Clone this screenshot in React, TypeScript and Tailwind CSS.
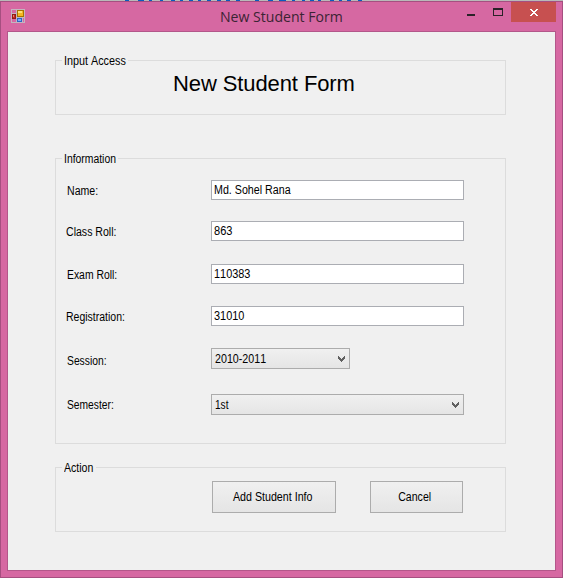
import type { ReactNode } from "react";

const backdropMarks = [
  [125, 4], [138, 6], [149, 3], [160, 3], [171, 4], [180, 3], [189, 4], [198, 3], [207, 4], [217, 4], [226, 4], [236, 4],
  [255, 4], [268, 5], [279, 7], [292, 3], [302, 3], [310, 4], [318, 3], [330, 4], [339, 3], [347, 4], [358, 4],
];

function AppIcon() {
  return (
    <svg width="14" height="14" viewBox="0 0 14 14" shapeRendering="crispEdges">
      <path fill="#c3b6c0" d="M0 0h14v14H0z" />
      <path fill="#d668a2" d="M1 1h4v3H1zM1 10h4v3H1zM12 9h1v4h-1z" />
      <path fill="#8d1d16" d="M1 5h4v5H1z" />
      <path fill="#c8281c" d="M2 6h2v3H2z" />
      <path fill="#ef7b6a" d="M2 6h1v2H2z" />
      <path fill="#a87300" d="M6 1h7v7H6z" />
      <path fill="#f5b922" d="M7 2h5v5H7z" />
      <path fill="#ffe173" d="M7 2h4v2H7z" />
      <path fill="#2f62c4" d="M6 9h5v4H6z" />
      <path fill="#77aef7" d="M7 10h3v2H7z" />
    </svg>
  );
}

function TitleBar() {
  return (
    <div className="flex h-[29px] items-start">
      <div className="ml-[10px] mt-[7px] h-[14px] w-[14px]">
        <AppIcon />
      </div>
      <div className="ml-[195px] mt-[4px] w-[215px] whitespace-nowrap font-['Open_Sans',sans-serif] text-[15px] leading-[20px] text-[#3b2434]">
        <span className="inline-block origin-left scale-x-[0.938]">New Student Form</span>
      </div>
      <div className="ml-[32px] mt-[12px] h-[2px] w-[8px] bg-[#2a2228]" />
      <div className="ml-[18px] mt-[6px] h-[8px] w-[10px] border border-t-2 border-[#2a2228]" />
      <div className="ml-[8px] flex h-[20px] w-[45px] items-center justify-center bg-[#c75050]">
        <svg width="8" height="7" viewBox="0 0 8 7" shapeRendering="crispEdges" fill="#fff">
          <path d="M0 0h2v1H0zM6 0h2v1H6zM1 1h2v1H1zM5 1h2v1H5zM2 2h4v1H2zM3 3h2v1H3zM2 4h4v1H2zM1 5h2v1H1zM5 5h2v1H5zM0 6h2v1H0zM6 6h2v1H6z" />
        </svg>
      </div>
    </div>
  );
}

function Text({ children, className }: { children: string; className: string }) {
  return <span className={`inline-block whitespace-nowrap ${className}`}>{children}</span>;
}

function Group({ title, className, legend, scale, children }: { title: string; className: string; legend: string; scale: string; children: ReactNode }) {
  return (
    <section className={`w-[451px] border border-[#dcdcdc] ${className}`}>
      <div className={`-mt-[7px] ml-[6px] h-[14px] whitespace-nowrap bg-[#f0f0f0] pl-[2px] leading-[14px] ${legend}`}>
        <Text className={`origin-left ${scale}`}>{title}</Text>
      </div>
      {children}
    </section>
  );
}

function Row({ label, labelClass, scale, gap, children }: { label: string; labelClass: string; scale: string; gap: string; children: ReactNode }) {
  return (
    <div className={`flex items-start ${gap}`}>
      <div className={`w-[155px] leading-[14px] ${labelClass}`}>
        <Text className={`origin-left ${scale}`}>{label}</Text>
      </div>
      {children}
    </div>
  );
}

function Field({ value, scale }: { value: string; scale: string }) {
  return (
    <div className="h-[20px] w-[253px] border border-[#abadb3] bg-white pl-[2px] leading-[18px]">
      <Text className={`origin-left ${scale}`}>{value}</Text>
    </div>
  );
}

function Combo({ value, className, scale }: { value: string; className: string; scale: string }) {
  return (
    <div className={`flex h-[21px] justify-between border border-[#acacac] bg-linear-to-b from-[#f0f0f0] to-[#e5e5e5] pl-[3px] leading-[21px] ${className}`}>
      <Text className={`origin-left ${scale}`}>{value}</Text>
      <svg className="mr-[4px] mt-[7px]" width="7" height="6" viewBox="0 0 7 6" shapeRendering="crispEdges" fill="#606060">
        <path d="M0 0h1v1H0zM6 0h1v1H6zM0 1h2v1H0zM5 1h2v1H5zM0 2h3v1H0zM4 2h3v1H4zM1 3h5v1H1zM2 4h3v1H2zM3 5h1v1H3z" />
      </svg>
    </div>
  );
}

function Button({ children, className, scale }: { children: string; className: string; scale: string }) {
  return (
    <button className={`flex h-[32px] justify-center border border-[#acacac] bg-linear-to-b from-[#f0f0f0] to-[#e5e5e5] leading-[30px] ${className}`}>
      <Text className={scale}>{children}</Text>
    </button>
  );
}

export default function App() {
  return (
    <div className="h-[578px] w-[563px] overflow-hidden bg-[#b9b9b9] font-['Liberation_Sans',Arial,sans-serif] text-[12px] text-black [font-kerning:none]">
      <div className="relative h-px">
        {backdropMarks.map(([left, width]) => (
          <i key={left} className="absolute top-0 h-px bg-[#0a5cc0]" style={{ left, width }} />
        ))}
      </div>
      <div className="h-[577px] border border-[#a64f80] bg-[#d668a2]">
        <TitleBar />
        <main className="ml-[6px] h-[540px] w-[549px] border border-[#b3578a] bg-[#f0f0f0] pl-[47px] pt-[28px]">
          <Group title="Input Access" className="h-[55px]" legend="w-[66px]" scale="scale-x-[0.9]">
            <h1 className="ml-[117px] mt-[3px] whitespace-nowrap text-[22px] leading-[26px] tracking-[-0.1px]">New Student Form</h1>
          </Group>
          <Group title="Information" className="mt-[43px] h-[286px]" legend="w-[56px]" scale="scale-x-[0.865]">
            <Row gap="mt-[14px]" label="Name:" labelClass="pl-[11px] pt-[4px]" scale="scale-x-[0.88]">
              <Field value="Md. Sohel Rana" scale="scale-x-[0.89]" />
            </Row>
            <Row gap="mt-[21px]" label="Class Roll:" labelClass="pl-[10px] pt-[4px]" scale="scale-x-[0.88]">
              <Field value="863" scale="scale-x-[0.92]" />
            </Row>
            <Row gap="mt-[23px]" label="Exam Roll:" labelClass="pl-[11px] pt-[4px]" scale="scale-x-[0.865]">
              <Field value="110383" scale="scale-x-[0.91]" />
            </Row>
            <Row gap="mt-[22px]" label="Registration:" labelClass="pl-[10px] pt-[4px]" scale="scale-x-[0.875]">
              <Field value="31010" scale="scale-x-[0.91]" />
            </Row>
            <Row gap="mt-[22px]" label="Session:" labelClass="pl-[11px] pt-[6px]" scale="scale-x-[0.86]">
              <Combo value="2010-2011" className="w-[139px]" scale="scale-x-[0.89]" />
            </Row>
            <Row gap="mt-[25px]" label="Semester:" labelClass="pl-[11px] pt-[4px]" scale="scale-x-[0.855]">
              <Combo value="1st" className="w-[253px]" scale="scale-x-[0.84]" />
            </Row>
          </Group>
          <Group title="Action" className="mt-[23px] h-[65px]" legend="w-[34px]" scale="scale-x-[0.88]">
            <div className="ml-[156px] mt-[6px] flex gap-[34px]">
              <Button className="w-[124px]" scale="-ml-[2px] scale-x-[0.89]">Add Student Info</Button>
              <Button className="w-[93px]" scale="-ml-[3px] scale-x-[0.88]">Cancel</Button>
            </div>
          </Group>
        </main>
      </div>
    </div>
  );
}
